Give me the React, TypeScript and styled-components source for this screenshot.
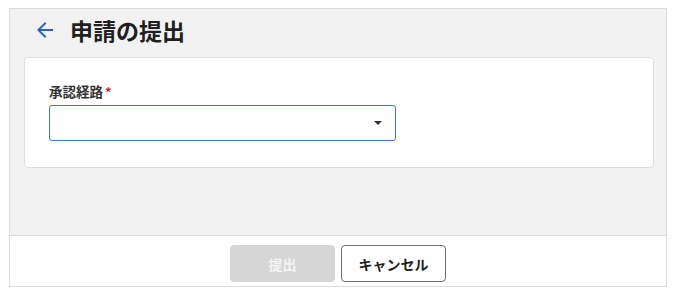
import React from "react";
import styled, { createGlobalStyle } from "styled-components";

const Global = createGlobalStyle`
  html, body { margin: 0; padding: 0; background: #ffffff; }
  body { font-family: "Noto Sans CJK JP", "Noto Sans", sans-serif; }
  * { box-sizing: border-box; }
`;

const Page = styled.div`
  padding: 8px 9px 0 9px;
`;

const Frame = styled.div`
  width: 658px;
  height: 279px;
  border: 1px solid #dcdcdc;
  background: #f2f2f2;
  display: flex;
  flex-direction: column;
`;

const Header = styled.div`
  height: 42px;
  display: flex;
  align-items: center;
  gap: 13px;
  padding-left: 23px;
`;

const BackButton = styled.button`
  border: none;
  background: transparent;
  padding: 0;
  display: flex;
  align-items: center;
  cursor: pointer;
`;

const Title = styled.h1`
  margin: 0;
  font-size: 23px;
  font-weight: 700;
  color: #1f1f1f;
  line-height: 1;
`;

const Main = styled.div`
  flex: 1;
  padding: 6px 12px 0 14px;
`;

const Card = styled.div`
  background: #ffffff;
  border: 1px solid #dedede;
  border-radius: 4px;
  padding: 23px 24px 26px 24px;
`;

const Label = styled.div`
  font-size: 13.5px;
  font-weight: 700;
  color: #333333;
  line-height: 20px;
  display: flex;
  align-items: flex-start;
  gap: 2px;
  margin-bottom: 4px;
`;

const Required = styled.span`
  color: #d8203a;
  font-size: 13px;
  line-height: 13px;
  margin-top: 4px;
`;

const Select = styled.div`
  width: 347px;
  height: 36px;
  border: 1.5px solid #3f75d8;
  border-radius: 3px;
  display: flex;
  align-items: center;
  justify-content: flex-end;
  padding-right: 13px;
`;

const Caret = styled.span`
  width: 0;
  height: 0;
  border-left: 4px solid transparent;
  border-right: 4px solid transparent;
  border-top: 4px solid #333333;
`;

const Footer = styled.div`
  height: 51px;
  background: #ffffff;
  border-top: 1px solid #dcdcdc;
  display: flex;
  justify-content: center;
  align-items: flex-start;
  padding-top: 9px;
  gap: 6px;
`;

const Button = styled.button<{ $primary?: boolean }>`
  width: 105px;
  height: 37px;
  border-radius: 4px;
  font-family: "Noto Sans CJK JP", "Noto Sans", sans-serif;
  font-size: 14px;
  font-weight: 700;
  cursor: pointer;
  background: ${(p) => (p.$primary ? "#d6d6d6" : "#ffffff")};
  color: ${(p) => (p.$primary ? "#f4f4f4" : "#222222")};
  border: ${(p) => (p.$primary ? "1px solid #d6d6d6" : "1px solid #6e6e6e")};
`;

export default function App() {
  return (
    <>
      <Global />
      <Page>
        <Frame>
          <Header>
            <BackButton aria-label="戻る">
              <svg width="24" height="24" viewBox="0 0 24 24">
                <path
                  d="M20 11H7.83l5.59-5.59L12 4l-8 8 8 8 1.41-1.41L7.83 13H20v-2z"
                  fill="#2862c8"
                />
              </svg>
            </BackButton>
            <Title>申請の提出</Title>
          </Header>
          <Main>
            <Card>
              <Label>
                承認経路<Required>*</Required>
              </Label>
              <Select>
                <Caret />
              </Select>
            </Card>
          </Main>
          <Footer>
            <Button $primary disabled>
              提出
            </Button>
            <Button>キャンセル</Button>
          </Footer>
        </Frame>
      </Page>
    </>
  );
}
